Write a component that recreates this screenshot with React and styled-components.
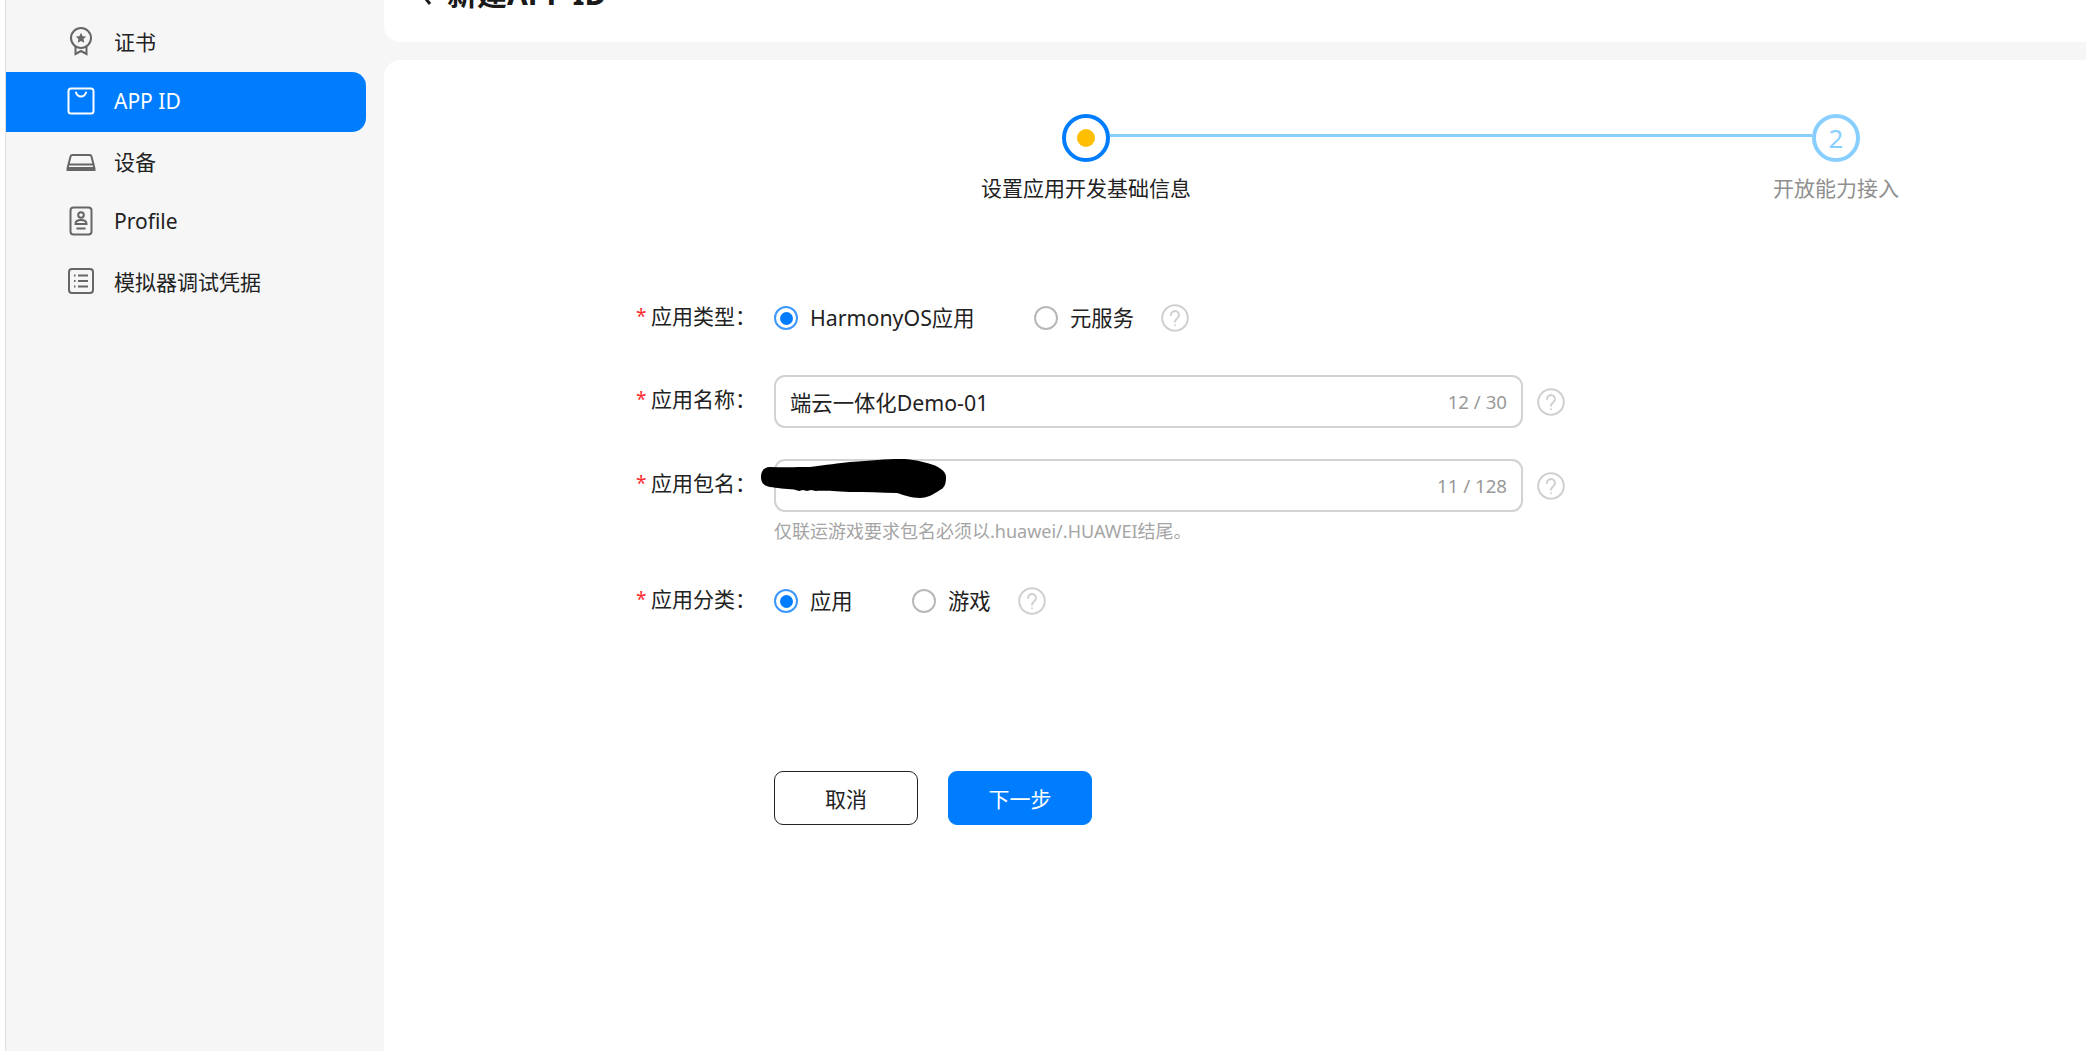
import React from "react";
import styled, { createGlobalStyle } from "styled-components";

const Global = createGlobalStyle`
  html, body { margin: 0; height: 100%; overflow: hidden; background: #fff; }
  #root { height: 100%; }
  * { box-sizing: border-box; }
  body { font-family: "Noto Sans", "Noto Sans CJK SC", sans-serif; color: #222; }
`;

const Page = styled.div`
  display: flex;
  height: 1051px;
  padding-left: 5px;
  background: #fff;
  overflow: hidden;
`;

const Sidebar = styled.aside`
  width: 379px;
  flex: none;
  background: #f6f6f6;
  border-left: 1px solid #ddd;
  padding: 12px 18px 0 0;
  display: flex;
  flex-direction: column;
`;

const NavItem = styled.div`
  height: 60px;
  display: flex;
  align-items: center;
  font-size: 21px;
  padding: 0 0 2px 60px;
  gap: 18px;
  color: ${(p) => (p.$active ? "#fff" : "#222")};
  background: ${(p) => (p.$active ? "#007dff" : "transparent")};
  border-radius: 0 14px 14px 0;
`;

const NavIcon = styled.svg`
  width: 30px;
  height: 30px;
  flex: none;
  fill: none;
  stroke: ${(p) => (p.$active ? "#fff" : "#666")};
  stroke-width: 2;
`;

const Main = styled.main`
  flex: 1;
  background: #f6f6f6;
  display: flex;
  flex-direction: column;
  gap: 18px;
  min-width: 0;
`;

const Header = styled.header`
  height: 42px;
  background: #fff;
  border-radius: 0 0 0 16px;
  overflow: hidden;
  display: flex;
  align-items: flex-start;
  padding-left: 36px;
`;

const Title = styled.h1`
  margin: -26px 0 0;
  display: flex;
  align-items: center;
  gap: 15px;
  font-size: 30px;
  line-height: 40px;
  font-weight: 700;
  color: #1a1a1a;
`;

const Panel = styled.section`
  flex: 1;
  background: #fff;
  border-radius: 16px 0 0 0;
  padding-top: 54px;
`;

const Stepper = styled.div`
  margin-left: 597px;
`;

const StepTrack = styled.div`
  display: flex;
  align-items: center;
  padding-left: 81px;
`;

const StepCircle = styled.div`
  width: 48px;
  height: 48px;
  flex: none;
  border-radius: 50%;
  border: 4px solid ${(p) => (p.$active ? "#007dff" : "#88cfff")};
  display: flex;
  align-items: center;
  justify-content: center;
  color: #88cfff;
  font-size: 26px;
`;

const StepDot = styled.div`
  width: 18px;
  height: 18px;
  border-radius: 50%;
  background: #ffbf00;
`;

const StepLine = styled.div`
  width: 702px;
  height: 3px;
  margin-top: -5px;
  background: #88cfff;
`;

const StepLabels = styled.div`
  display: flex;
  margin-top: 10px;
  height: 32px;
`;

const StepLabel = styled.div`
  flex: none;
  width: ${(p) => p.$w}px;
  margin-left: ${(p) => p.$ml || 0}px;
  text-align: center;
  font-size: 21px;
  line-height: 32px;
  white-space: nowrap;
  color: ${(p) => (p.$muted ? "#8f8f8f" : "#222")};
`;

const Form = styled.div`
  margin-left: 252px;
  display: flex;
  flex-direction: column;
  position: relative;
`;

const Row = styled.div`
  display: flex;
  align-items: center;
  margin-top: ${(p) => p.$mt}px;
  height: ${(p) => p.$h}px;
`;

const Label = styled.label`
  width: 138px;
  flex: none;
  display: flex;
  font-size: 21px;
  line-height: 32px;
  margin-top: ${(p) => p.$mt || 0}px;
  color: #222;
  white-space: nowrap;
`;

const Star = styled.span`
  color: #fa2a2d;
  width: 15px;
  font-size: 19px;
`;

const Radio = styled.span`
  width: 24px;
  height: 24px;
  flex: none;
  border-radius: 50%;
  border: 2px solid ${(p) => (p.$on ? "#3a98ff" : "#b8b8b8")};
  display: flex;
  align-items: center;
  justify-content: center;
  &::after {
    content: "";
    display: ${(p) => (p.$on ? "block" : "none")};
    width: 13px;
    height: 13px;
    border-radius: 50%;
    background: #007dff;
  }
`;

const RadioText = styled.span`
  margin-left: 12px;
  width: ${(p) => p.$w}px;
  font-size: 21.33px;
  line-height: 32px;
  white-space: nowrap;
  color: #222;
`;

const Help = styled.svg`
  width: 28px;
  height: 28px;
  flex: none;
  margin-left: ${(p) => p.$ml}px;
  fill: none;
  stroke: #d0d0d0;
  stroke-width: 2;
`;

const InputBox = styled.div`
  width: 749px;
  height: 53px;
  flex: none;
  border: 2px solid #d2d2d2;
  border-radius: 11px;
  display: flex;
  align-items: center;
  justify-content: space-between;
  padding: 0 14px;
  font-size: 21.33px;
  color: #222;
`;

const Counter = styled.span`
  font-size: 18.67px;
  color: #999;
`;

const Hint = styled.div`
  margin: 6px 0 0 138px;
  height: 26px;
  font-size: 18px;
  line-height: 26px;
  color: #a5a5a5;
  white-space: nowrap;
`;

const Buttons = styled.div`
  display: flex;
  gap: 30px;
  margin: 154px 0 0 138px;
`;

const Button = styled.button`
  width: 144px;
  height: 54px;
  padding: 0;
  border-radius: 9px;
  font: inherit;
  font-size: 21px;
  border: 1px solid ${(p) => (p.$primary ? "#007dff" : "#222")};
  background: ${(p) => (p.$primary ? "#007dff" : "#fff")};
  color: ${(p) => (p.$primary ? "#fff" : "#222")};
`;

const Redaction = styled.svg`
  position: absolute;
  left: 125px;
  top: 255px;
  width: 185px;
  height: 40px;
`;

const HelpIcon = ({ ml }) => (
  <Help $ml={ml} viewBox="0 0 28 28">
    <circle cx="14" cy="14" r="12.8" />
    <path d="M10 11a4 4 0 1 1 6.3 3.3c-1.5 1-2.3 1.8-2.3 3.4" strokeLinecap="round" />
    <circle cx="14" cy="21.3" r="1" fill="#d0d0d0" stroke="none" />
  </Help>
);

export default function App() {
  return (
    <Page>
      <Global />
      <Sidebar>
        <NavItem>
          <NavIcon viewBox="0 0 30 30">
            <circle cx="15" cy="12" r="10" />
            <path d="M15 6.8l1.6 3.4 3.7.4-2.8 2.5.8 3.7-3.3-1.9-3.3 1.9.8-3.7-2.8-2.5 3.7-.4z" fill="#666" stroke="none" />
            <path d="M9.5 21v7l5.5-3 5.5 3v-7" />
          </NavIcon>
          证书
        </NavItem>
        <NavItem $active>
          <NavIcon $active viewBox="0 0 30 30">
            <rect x="2.5" y="2.5" width="25" height="25" rx="2.5" />
            <path d="M10 6.5c1 3 3 4 5 4s4-1 5-4" strokeLinecap="round" />
          </NavIcon>
          APP ID
        </NavItem>
        <NavItem>
          <NavIcon viewBox="0 0 30 30">
            <path d="M1.5 22.5l3-12c.2-1 1-1.5 2-1.5h17c1 0 1.8.5 2 1.5l3 12v1.5h-27zM1.5 18.5h27M1.5 22h27" />
          </NavIcon>
          设备
        </NavItem>
        <NavItem>
          <NavIcon viewBox="0 0 30 30">
            <rect x="4.5" y="1.5" width="21" height="27" rx="3" />
            <circle cx="15" cy="9" r="2.8" />
            <path d="M9.5 18c0-3 2.5-4 5.5-4s5.5 1 5.5 4zM10.5 22.5h9" />
          </NavIcon>
          Profile
        </NavItem>
        <NavItem>
          <NavIcon viewBox="0 0 30 30">
            <rect x="3" y="3" width="24" height="24" rx="3" />
            <path d="M8 9.5h1.5M8 15h1.5M8 20.5h1.5M12 9.5h10M12 15h10M12 20.5h10" />
          </NavIcon>
          模拟器调试凭据
        </NavItem>
      </Sidebar>
      <Main>
        <Header>
          <Title>
            <svg width="12" height="24" viewBox="0 0 12 24" fill="none" stroke="#1a1a1a" strokeWidth="3">
              <path d="M10 2L2 12l8 10" />
            </svg>
            新建APP ID
          </Title>
        </Header>
        <Panel>
          <Stepper>
            <StepTrack>
              <StepCircle $active>
                <StepDot />
              </StepCircle>
              <StepLine />
              <StepCircle>2</StepCircle>
            </StepTrack>
            <StepLabels>
              <StepLabel $w={210}>设置应用开发基础信息</StepLabel>
              <StepLabel $w={200} $ml={545} $muted>开放能力接入</StepLabel>
            </StepLabels>
          </Stepper>
          <Form>
            <Row $mt={98} $h={32}>
              <Label $mt={-4}>
                <Star>*</Star>应用类型：
              </Label>
              <Radio $on />
              <RadioText $w={224}>HarmonyOS应用</RadioText>
              <Radio />
              <RadioText $w={63}>元服务</RadioText>
              <HelpIcon ml={28} />
            </Row>
            <Row $mt={41} $h={53}>
              <Label $mt={-6}>
                <Star>*</Star>应用名称：
              </Label>
              <InputBox>
                端云一体化Demo-01
                <Counter>12 / 30</Counter>
              </InputBox>
              <HelpIcon ml={14} />
            </Row>
            <Row $mt={31} $h={53}>
              <Label $mt={-6}>
                <Star>*</Star>应用包名：
              </Label>
              <InputBox>
                <span />
                <Counter>11 / 128</Counter>
              </InputBox>
              <HelpIcon ml={14} />
            </Row>
            <Redaction viewBox="0 0 185 40">
              <path d="M0 18C0 11 4 8 9 8C25 8.5 40 8 49 8C65 6 78 4 89 3C110 1.5 125 0 139 0C150 0 158 2 166 4C178 7 185 12 185 18C185 26 183 29 179 31C172 36 165 39 159 39C150 39 143 36 136 34C120 33.5 105 33 89 33C70 32 60 31.5 55 32L50 31L46 32L42 31L38 32L33 30.5C25 30 15 29 9 28C3 27 0 24 0 18Z" fill="#000" />
            </Redaction>
            <Hint>仅联运游戏要求包名必须以.huawei/.HUAWEI结尾。</Hint>
            <Row $mt={41} $h={32}>
              <Label $mt={-4}>
                <Star>*</Star>应用分类：
              </Label>
              <Radio $on />
              <RadioText $w={102}>应用</RadioText>
              <Radio />
              <RadioText $w={42}>游戏</RadioText>
              <HelpIcon ml={28} />
            </Row>
            <Buttons>
              <Button>取消</Button>
              <Button $primary>下一步</Button>
            </Buttons>
          </Form>
        </Panel>
      </Main>
    </Page>
  );
}
